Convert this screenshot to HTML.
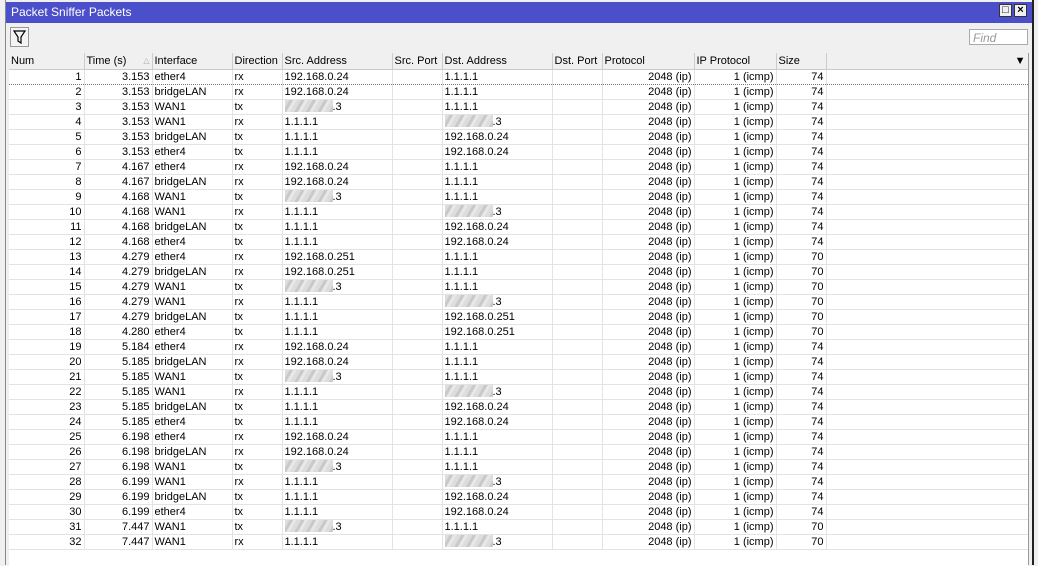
<!DOCTYPE html>
<html><head><style>
body{margin:0;width:1038px;height:565px;overflow:hidden;background:#f0f0f0;font-family:"Liberation Sans",Arial,sans-serif;font-size:11px;color:#000;position:relative}
.win{position:absolute;left:5px;top:0;width:1028px;height:565px;background:#f0f0f0;border-left:1px solid #888;}
.title{position:absolute;left:0;top:2px;width:1027px;height:21px;background:#4b4fc9;color:#fff;font-size:12px;line-height:21px;padding-left:5px;box-sizing:border-box}
.btn{position:absolute;top:4px;width:13px;height:13px;background:#f0f0f0;border:1px solid #333;box-sizing:border-box;color:#000;font-size:11px;line-height:11px;text-align:center;font-weight:bold}
.tb{position:absolute;left:4px;top:27px;width:19px;height:20px;border:1px solid #999;background:#f4f4f4;box-sizing:border-box}
.find{position:absolute;left:963px;top:29px;width:59px;height:16px;border:1px solid #aaa;background:#fff;color:#999;font-style:italic;font-size:12px;line-height:16px;padding-left:3px;box-sizing:border-box}
table{position:absolute;left:3px;top:53px;border-collapse:collapse;table-layout:fixed;background:#fff}
td{height:14px;padding:0 2px;border-right:1px solid #e3e3e3;border-bottom:1px solid #e3e3e3;white-space:nowrap;overflow:hidden;line-height:14px}
th{height:16px;font-weight:normal;text-align:left;padding:0 2px;background:#f0f0f0;border-right:1px solid #ccc;border-bottom:1px solid #ccc;line-height:16px}
.r{text-align:right}
.b{display:inline-block;width:48px;height:12px;vertical-align:-2px;background:repeating-linear-gradient(120deg,#ddd 0 4px,#c9c9c9 4px 7px,#e8e8e8 7px 10px)}
tr.sel td{border-top:1px dotted #777;border-bottom:1px dotted #777}
.frame{position:absolute;left:1022px;top:53px;width:1px;height:512px;background:#999}
.frame2{position:absolute;left:1026px;top:0;width:2px;height:565px;background:#222}
</style></head><body>
<div class="win">
<div class="title">Packet Sniffer Packets</div>
<div class="btn" style="left:993px">□</div>
<div class="btn" style="left:1008px">×</div>
<div class="tb"><svg width="17" height="18" viewBox="0 0 17 18"><path d="M3 3h11l-4 6v6l-3-2v-4z" fill="none" stroke="#000" stroke-width="1.2"/></svg></div>
<div class="find">Find</div>
<table>
<colgroup><col style="width:75px"><col style="width:68px"><col style="width:80px"><col style="width:50px"><col style="width:110px"><col style="width:50px"><col style="width:110px"><col style="width:50px"><col style="width:92px"><col style="width:82px"><col style="width:50px"><col style="width:202px"></colgroup>
<tr><th>Num</th><th>Time (s)<span style="float:right;color:#aaa;font-size:8px">△</span></th><th>Interface</th><th>Direction</th><th>Src. Address</th><th>Src. Port</th><th>Dst. Address</th><th>Dst. Port</th><th>Protocol</th><th>IP Protocol</th><th>Size</th><th style="text-align:right">▼</th></tr>
<tr class="sel"><td class="r">1</td><td class="r">3.153</td><td>ether4</td><td>rx</td><td>192.168.0.24</td><td></td><td>1.1.1.1</td><td></td><td class="r">2048 (ip)</td><td class="r">1 (icmp)</td><td class="r">74</td><td></td></tr>
<tr><td class="r">2</td><td class="r">3.153</td><td>bridgeLAN</td><td>rx</td><td>192.168.0.24</td><td></td><td>1.1.1.1</td><td></td><td class="r">2048 (ip)</td><td class="r">1 (icmp)</td><td class="r">74</td><td></td></tr>
<tr><td class="r">3</td><td class="r">3.153</td><td>WAN1</td><td>tx</td><td><span class="b"></span>.3</td><td></td><td>1.1.1.1</td><td></td><td class="r">2048 (ip)</td><td class="r">1 (icmp)</td><td class="r">74</td><td></td></tr>
<tr><td class="r">4</td><td class="r">3.153</td><td>WAN1</td><td>rx</td><td>1.1.1.1</td><td></td><td><span class="b"></span>.3</td><td></td><td class="r">2048 (ip)</td><td class="r">1 (icmp)</td><td class="r">74</td><td></td></tr>
<tr><td class="r">5</td><td class="r">3.153</td><td>bridgeLAN</td><td>tx</td><td>1.1.1.1</td><td></td><td>192.168.0.24</td><td></td><td class="r">2048 (ip)</td><td class="r">1 (icmp)</td><td class="r">74</td><td></td></tr>
<tr><td class="r">6</td><td class="r">3.153</td><td>ether4</td><td>tx</td><td>1.1.1.1</td><td></td><td>192.168.0.24</td><td></td><td class="r">2048 (ip)</td><td class="r">1 (icmp)</td><td class="r">74</td><td></td></tr>
<tr><td class="r">7</td><td class="r">4.167</td><td>ether4</td><td>rx</td><td>192.168.0.24</td><td></td><td>1.1.1.1</td><td></td><td class="r">2048 (ip)</td><td class="r">1 (icmp)</td><td class="r">74</td><td></td></tr>
<tr><td class="r">8</td><td class="r">4.167</td><td>bridgeLAN</td><td>rx</td><td>192.168.0.24</td><td></td><td>1.1.1.1</td><td></td><td class="r">2048 (ip)</td><td class="r">1 (icmp)</td><td class="r">74</td><td></td></tr>
<tr><td class="r">9</td><td class="r">4.168</td><td>WAN1</td><td>tx</td><td><span class="b"></span>.3</td><td></td><td>1.1.1.1</td><td></td><td class="r">2048 (ip)</td><td class="r">1 (icmp)</td><td class="r">74</td><td></td></tr>
<tr><td class="r">10</td><td class="r">4.168</td><td>WAN1</td><td>rx</td><td>1.1.1.1</td><td></td><td><span class="b"></span>.3</td><td></td><td class="r">2048 (ip)</td><td class="r">1 (icmp)</td><td class="r">74</td><td></td></tr>
<tr><td class="r">11</td><td class="r">4.168</td><td>bridgeLAN</td><td>tx</td><td>1.1.1.1</td><td></td><td>192.168.0.24</td><td></td><td class="r">2048 (ip)</td><td class="r">1 (icmp)</td><td class="r">74</td><td></td></tr>
<tr><td class="r">12</td><td class="r">4.168</td><td>ether4</td><td>tx</td><td>1.1.1.1</td><td></td><td>192.168.0.24</td><td></td><td class="r">2048 (ip)</td><td class="r">1 (icmp)</td><td class="r">74</td><td></td></tr>
<tr><td class="r">13</td><td class="r">4.279</td><td>ether4</td><td>rx</td><td>192.168.0.251</td><td></td><td>1.1.1.1</td><td></td><td class="r">2048 (ip)</td><td class="r">1 (icmp)</td><td class="r">70</td><td></td></tr>
<tr><td class="r">14</td><td class="r">4.279</td><td>bridgeLAN</td><td>rx</td><td>192.168.0.251</td><td></td><td>1.1.1.1</td><td></td><td class="r">2048 (ip)</td><td class="r">1 (icmp)</td><td class="r">70</td><td></td></tr>
<tr><td class="r">15</td><td class="r">4.279</td><td>WAN1</td><td>tx</td><td><span class="b"></span>.3</td><td></td><td>1.1.1.1</td><td></td><td class="r">2048 (ip)</td><td class="r">1 (icmp)</td><td class="r">70</td><td></td></tr>
<tr><td class="r">16</td><td class="r">4.279</td><td>WAN1</td><td>rx</td><td>1.1.1.1</td><td></td><td><span class="b"></span>.3</td><td></td><td class="r">2048 (ip)</td><td class="r">1 (icmp)</td><td class="r">70</td><td></td></tr>
<tr><td class="r">17</td><td class="r">4.279</td><td>bridgeLAN</td><td>tx</td><td>1.1.1.1</td><td></td><td>192.168.0.251</td><td></td><td class="r">2048 (ip)</td><td class="r">1 (icmp)</td><td class="r">70</td><td></td></tr>
<tr><td class="r">18</td><td class="r">4.280</td><td>ether4</td><td>tx</td><td>1.1.1.1</td><td></td><td>192.168.0.251</td><td></td><td class="r">2048 (ip)</td><td class="r">1 (icmp)</td><td class="r">70</td><td></td></tr>
<tr><td class="r">19</td><td class="r">5.184</td><td>ether4</td><td>rx</td><td>192.168.0.24</td><td></td><td>1.1.1.1</td><td></td><td class="r">2048 (ip)</td><td class="r">1 (icmp)</td><td class="r">74</td><td></td></tr>
<tr><td class="r">20</td><td class="r">5.185</td><td>bridgeLAN</td><td>rx</td><td>192.168.0.24</td><td></td><td>1.1.1.1</td><td></td><td class="r">2048 (ip)</td><td class="r">1 (icmp)</td><td class="r">74</td><td></td></tr>
<tr><td class="r">21</td><td class="r">5.185</td><td>WAN1</td><td>tx</td><td><span class="b"></span>.3</td><td></td><td>1.1.1.1</td><td></td><td class="r">2048 (ip)</td><td class="r">1 (icmp)</td><td class="r">74</td><td></td></tr>
<tr><td class="r">22</td><td class="r">5.185</td><td>WAN1</td><td>rx</td><td>1.1.1.1</td><td></td><td><span class="b"></span>.3</td><td></td><td class="r">2048 (ip)</td><td class="r">1 (icmp)</td><td class="r">74</td><td></td></tr>
<tr><td class="r">23</td><td class="r">5.185</td><td>bridgeLAN</td><td>tx</td><td>1.1.1.1</td><td></td><td>192.168.0.24</td><td></td><td class="r">2048 (ip)</td><td class="r">1 (icmp)</td><td class="r">74</td><td></td></tr>
<tr><td class="r">24</td><td class="r">5.185</td><td>ether4</td><td>tx</td><td>1.1.1.1</td><td></td><td>192.168.0.24</td><td></td><td class="r">2048 (ip)</td><td class="r">1 (icmp)</td><td class="r">74</td><td></td></tr>
<tr><td class="r">25</td><td class="r">6.198</td><td>ether4</td><td>rx</td><td>192.168.0.24</td><td></td><td>1.1.1.1</td><td></td><td class="r">2048 (ip)</td><td class="r">1 (icmp)</td><td class="r">74</td><td></td></tr>
<tr><td class="r">26</td><td class="r">6.198</td><td>bridgeLAN</td><td>rx</td><td>192.168.0.24</td><td></td><td>1.1.1.1</td><td></td><td class="r">2048 (ip)</td><td class="r">1 (icmp)</td><td class="r">74</td><td></td></tr>
<tr><td class="r">27</td><td class="r">6.198</td><td>WAN1</td><td>tx</td><td><span class="b"></span>.3</td><td></td><td>1.1.1.1</td><td></td><td class="r">2048 (ip)</td><td class="r">1 (icmp)</td><td class="r">74</td><td></td></tr>
<tr><td class="r">28</td><td class="r">6.199</td><td>WAN1</td><td>rx</td><td>1.1.1.1</td><td></td><td><span class="b"></span>.3</td><td></td><td class="r">2048 (ip)</td><td class="r">1 (icmp)</td><td class="r">74</td><td></td></tr>
<tr><td class="r">29</td><td class="r">6.199</td><td>bridgeLAN</td><td>tx</td><td>1.1.1.1</td><td></td><td>192.168.0.24</td><td></td><td class="r">2048 (ip)</td><td class="r">1 (icmp)</td><td class="r">74</td><td></td></tr>
<tr><td class="r">30</td><td class="r">6.199</td><td>ether4</td><td>tx</td><td>1.1.1.1</td><td></td><td>192.168.0.24</td><td></td><td class="r">2048 (ip)</td><td class="r">1 (icmp)</td><td class="r">74</td><td></td></tr>
<tr><td class="r">31</td><td class="r">7.447</td><td>WAN1</td><td>tx</td><td><span class="b"></span>.3</td><td></td><td>1.1.1.1</td><td></td><td class="r">2048 (ip)</td><td class="r">1 (icmp)</td><td class="r">70</td><td></td></tr>
<tr><td class="r">32</td><td class="r">7.447</td><td>WAN1</td><td>rx</td><td>1.1.1.1</td><td></td><td><span class="b"></span>.3</td><td></td><td class="r">2048 (ip)</td><td class="r">1 (icmp)</td><td class="r">70</td><td></td></tr>
<tr><td colspan="12" style="height:16px;border:none"></td></tr>
</table>
<div class="frame"></div>
<div class="frame2"></div>
</div>
</body></html>
